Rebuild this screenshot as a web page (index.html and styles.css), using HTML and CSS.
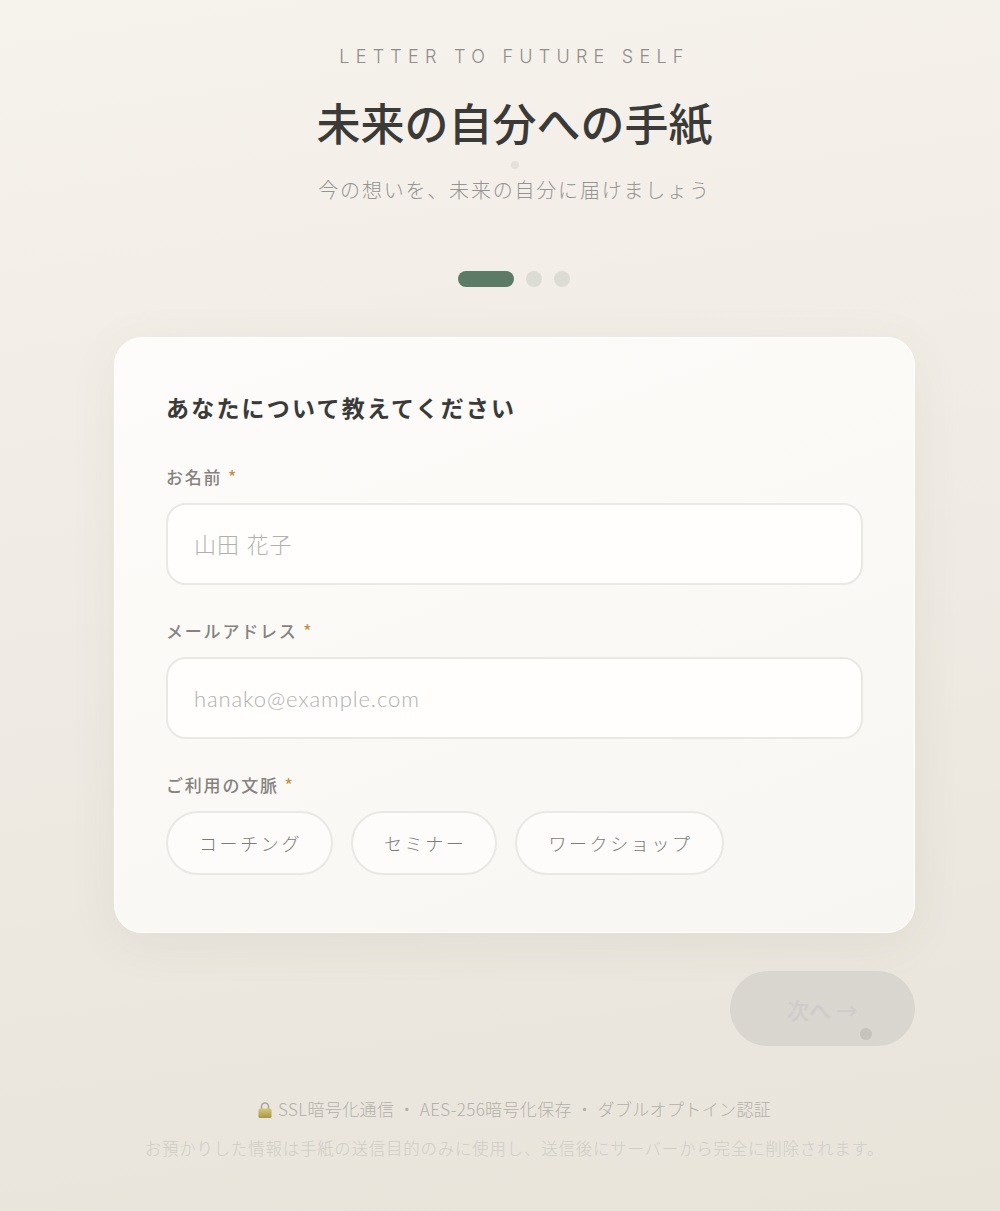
FILE: index.html
```html
<!DOCTYPE html>
<html lang="ja">
<head>
    <meta charset="UTF-8">
    <meta name="viewport" content="width=device-width, initial-scale=1.0">
    <title>未来の自分への手紙</title>
    <link rel="stylesheet" href="styles.css">
</head>
<body>
    <div class="page">
        <header class="hero">
            <p class="eyebrow">LETTER TO FUTURE SELF</p>
            <h1>未来の自分への手紙</h1>
            <span class="hero-dot"></span>
            <p class="lead">今の想いを、未来の自分に届けましょう</p>
        </header>

        <div class="steps">
            <span class="step step-active"></span>
            <span class="step"></span>
            <span class="step"></span>
        </div>

        <form class="card">
            <h2>あなたについて教えてください</h2>

            <label class="field-label" for="name">お名前 <span class="req">*</span></label>
            <input class="field" type="text" id="name" placeholder="山田 花子">

            <label class="field-label" for="email">メールアドレス <span class="req">*</span></label>
            <input class="field" type="email" id="email" placeholder="hanako@example.com">

            <div class="field-label">ご利用の文脈 <span class="req">*</span></div>
            <div class="chips">
                <button type="button" class="chip">コーチング</button>
                <button type="button" class="chip">セミナー</button>
                <button type="button" class="chip">ワークショップ</button>
            </div>
        </form>

        <div class="actions">
            <button class="next" disabled>次へ →<span class="next-dot"></span></button>
        </div>

        <footer class="notes">
            <p class="secure">
                <svg class="lock" viewBox="0 0 14 16" width="14" height="16" aria-hidden="true">
                    <defs>
                        <linearGradient id="lock-body" x1="0" y1="0" x2="0" y2="1">
                            <stop offset="0" stop-color="#d6c678"/>
                            <stop offset="1" stop-color="#a8964a"/>
                        </linearGradient>
                    </defs>
                    <path d="M3.5 8V4.5a3.5 3.5 0 0 1 7 0V8" fill="none" stroke="#a5a6a2" stroke-width="1.6"/>
                    <rect x="0.5" y="6.5" width="13" height="9.5" rx="1.5" fill="url(#lock-body)"/>
                </svg>
                SSL暗号化通信 ・ AES-256暗号化保存 ・ ダブルオプトイン認証
            </p>
            <p class="privacy">お預かりした情報は手紙の送信目的のみに使用し、送信後にサーバーから完全に削除されます。</p>
        </footer>
    </div>
</body>
</html>
```

FILE: styles.css
```css
* {
    margin: 0;
    padding: 0;
    box-sizing: border-box;
}

html,
body {
    height: 100%;
}

body {
    background: linear-gradient(172deg, #f6f2ec 0%, #efeae3 50%, #e8e4da 100%);
    font-family: "Noto Sans CJK JP", "Noto Sans", sans-serif;
    overflow: hidden;
}

.page {
    width: 801px;
    margin-left: 114px;
    padding-top: 45px;
}

/* header */
.hero {
    position: relative;
    text-align: center;
}

.eyebrow {
    font-family: "Inter", "Noto Sans", sans-serif;
    font-size: 18px;
    font-weight: 300;
    line-height: 24px;
    letter-spacing: 6.25px;
    color: #8e8d8a;
}

.hero h1 {
    margin-top: 20px;
    font-size: 44px;
    font-weight: 500;
    line-height: 66px;
    color: #3a3a38;
}

.hero-dot {
    position: absolute;
    left: 397px;
    top: 116px;
    width: 8px;
    height: 8px;
    border-radius: 50%;
    background: #e3e1da;
}

.lead {
    margin-top: 20px;
    font-size: 20px;
    font-weight: 300;
    line-height: 30px;
    letter-spacing: 1.8px;
    color: #959492;
}

/* step indicator */
.steps {
    display: flex;
    justify-content: center;
    gap: 12px;
    margin-top: 66px;
    padding-right: 1px;
}

.step {
    width: 16px;
    height: 16px;
    border-radius: 8px;
    background: #dcdcd5;
}

.step-active {
    width: 56px;
    background: #5b7b66;
}

/* card */
.card {
    margin-top: 50px;
    height: 596px;
    padding: 51px 51px;
    background: linear-gradient(160deg, #fdfcfa 0%, #f8f6f2 100%);
    border: 1px solid #ffffff;
    border-radius: 28px;
    box-shadow: 0 10px 50px rgba(90, 80, 60, 0.07);
}

.card h2 {
    font-size: 23px;
    font-weight: 700;
    line-height: 36px;
    letter-spacing: 2.2px;
    color: #3a3a38;
}

.field-label {
    display: block;
    font-size: 17px;
    font-weight: 500;
    line-height: 26px;
    letter-spacing: 1.8px;
    color: #85837f;
}

.card h2 + .field-label {
    margin-top: 39px;
}

.field + .field-label {
    margin-top: 33px;
}

.req {
    color: #c4914f;
}

.field {
    display: block;
    width: 100%;
    height: 82px;
    margin-top: 13px;
    padding: 0 26px;
    background: #fffefd;
    border: 2px solid #e9e8e5;
    border-radius: 20px;
    font-family: "Lato", "Noto Sans CJK JP", sans-serif;
    font-size: 22px;
    font-weight: 300;
    letter-spacing: 0.9px;
    color: #3a3a38;
    outline: none;
}

.field::placeholder {
    color: #b0b0ad;
}

.chips {
    display: flex;
    gap: 18px;
    margin-top: 13px;
}

.chip {
    height: 64px;
    padding: 0 29px 0 31px;
    background: #fdfcfa;
    border: 2px solid #e9e8e5;
    border-radius: 32px;
    font-family: inherit;
    font-size: 18px;
    font-weight: 300;
    letter-spacing: 2.6px;
    color: #7c7b77;
}

/* next button */
.actions {
    display: flex;
    justify-content: flex-end;
    margin-top: 38px;
}

.next {
    position: relative;
    width: 185px;
    height: 75px;
    background: #d9d5cf;
    border: none;
    border-radius: 38px;
    font-family: inherit;
    font-size: 22px;
    font-weight: 500;
    color: #cdcccb;
}

.next-dot {
    position: absolute;
    left: 130px;
    top: 57px;
    width: 12px;
    height: 12px;
    border-radius: 50%;
    background: #c4c3bc;
}

/* footer */
.notes {
    margin-top: 51px;
    text-align: center;
}

.secure {
    font-size: 17px;
    font-weight: 300;
    line-height: 24px;
    letter-spacing: 0.36px;
    color: #b2b0aa;
}

.lock {
    margin-right: 2px;
    vertical-align: -2px;
}

.privacy {
    margin-top: 15px;
    font-size: 16.5px;
    font-weight: 300;
    line-height: 24px;
    letter-spacing: 0.74px;
    white-space: nowrap;
    color: #cfccc6;
}
```
